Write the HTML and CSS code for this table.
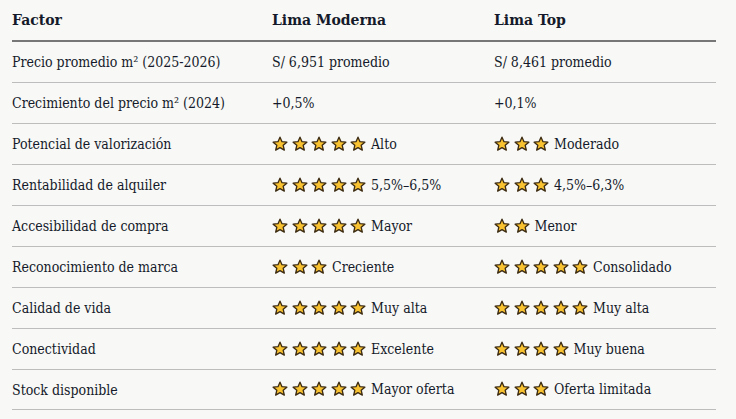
FILE: index.html
```html
<!DOCTYPE html>
<html lang="es">
<head>
<meta charset="utf-8">
<link rel="stylesheet" href="styles.css">
</head>
<body>
<svg width="0" height="0" class="defs">
  <defs>
    <symbol id="star" viewBox="0 0 24 24">
      <path d="M12 1.8l3 6.7 7.3.7-5.5 4.8 1.7 7.2-6.5-3.8-6.5 3.8 1.7-7.2-5.5-4.8 7.3-.7z" fill="#f9c231" stroke="#3b2a12" stroke-width="2" stroke-linejoin="round"/>
    </symbol>
  </defs>
</svg>
<table class="cmp">
  <thead>
    <tr><th>Factor</th><th>Lima Moderna</th><th>Lima Top</th></tr>
  </thead>
  <tbody>
    <tr><td>Precio promedio m² (2025-2026)</td><td>S/ 6,951 promedio</td><td>S/ 8,461 promedio</td></tr>
    <tr><td>Crecimiento del precio m² (2024)</td><td>+0,5%</td><td>+0,1%</td></tr>
    <tr><td>Potencial de valorización</td><td><span class="stars s5"></span>Alto</td><td><span class="stars s3"></span>Moderado</td></tr>
    <tr><td>Rentabilidad de alquiler</td><td><span class="stars s5"></span>5,5%–6,5%</td><td><span class="stars s3"></span>4,5%–6,3%</td></tr>
    <tr><td>Accesibilidad de compra</td><td><span class="stars s5"></span>Mayor</td><td><span class="stars s2"></span>Menor</td></tr>
    <tr><td>Reconocimiento de marca</td><td><span class="stars s3"></span>Creciente</td><td><span class="stars s5"></span>Consolidado</td></tr>
    <tr><td>Calidad de vida</td><td><span class="stars s5"></span>Muy alta</td><td><span class="stars s5"></span>Muy alta</td></tr>
    <tr><td>Conectividad</td><td><span class="stars s5"></span>Excelente</td><td><span class="stars s4"></span>Muy buena</td></tr>
    <tr><td>Stock disponible</td><td><span class="stars s5"></span>Mayor oferta</td><td><span class="stars s3"></span>Oferta limitada</td></tr>
  </tbody>
</table>
<script>
document.querySelectorAll('.stars').forEach(function(s){
  var n = parseInt(s.className.match(/s(\d)/)[1],10);
  var h='';
  for(var i=0;i<n;i++){h+='<svg class="star"><use href="#star"/></svg>';}
  s.innerHTML=h;
});
</script>
</body>
</html>
```
FILE: styles.css
```css
html, body { margin: 0; padding: 0; background: #f8f8f6; }
body { padding: 0 20px 0 12px; font-family: "DejaVu Serif Condensed", "DejaVu Serif", serif; color: #141a2a; }
.defs { position: absolute; }
.cmp { width: 704px; border-collapse: collapse; font-size: 14px; }
.cmp th { text-align: left; font-family: "DejaVu Serif", serif; font-weight: bold; font-size: 14px; height: 40px; padding: 0; border-bottom: 2px solid #777; vertical-align: middle; }
.cmp td { height: 40px; padding: 0; border-bottom: 1px solid #bdbdbd; vertical-align: middle; }
.cmp tbody tr:last-child td { height: 39px; }
.cmp th:nth-child(1), .cmp td:nth-child(1) { width: 260px; }
.cmp th:nth-child(2), .cmp td:nth-child(2) { width: 222px; }
.stars { display: inline-flex; gap: 3.5px; vertical-align: middle; margin-right: 5px; position: relative; top: -1px; }
.star { width: 16px; height: 16px; display: block; }
```
